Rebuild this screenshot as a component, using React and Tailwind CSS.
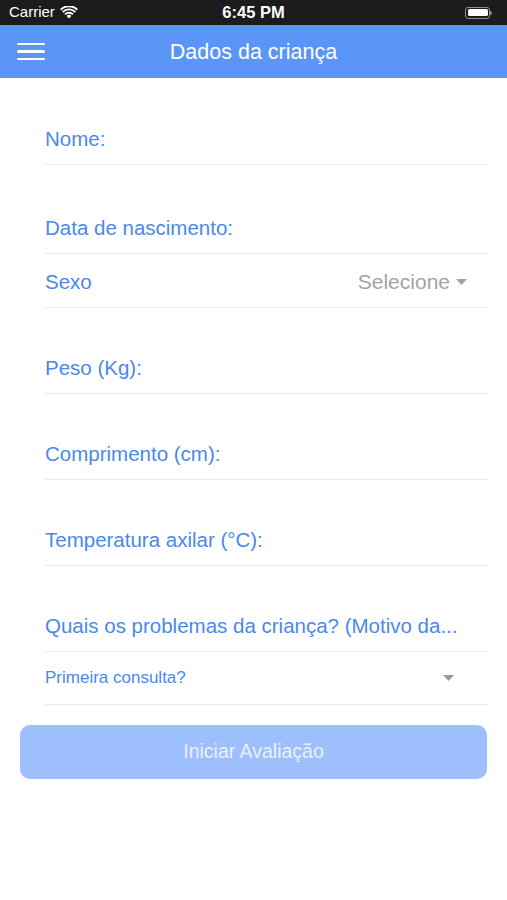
import React from 'react';

const font = { fontFamily: '"Liberation Sans", Arial, sans-serif' };

const Caret = ({ className }) => (
  <svg className={className} width="11" height="6" viewBox="0 0 11 6">
    <path d="M0 0 L11 0 L5.5 6 Z" fill="currentColor" />
  </svg>
);

const Field = ({ label, height = 'h-[86px]', children }) => (
  <div className={`${height} flex items-end border-b border-[#e9e9e9]`}>
    <div className="w-full flex items-center justify-between pb-[13px]">
      <span className="text-[20.5px] leading-[24px] text-[#4a88ee]">{label}</span>
      {children}
    </div>
  </div>
);

export default function App() {
  return (
    <div className="w-[507px] h-[900px] bg-white" style={font}>
      <div className="h-[25px] bg-[#1c1c1e] flex items-center justify-between px-[9px] text-white text-[15px] relative">
        <div className="flex items-center gap-[5px]">
          <span>Carrier</span>
          <svg width="18" height="13" viewBox="0 0 18 13">
            <path d="M9 12.5 L6.6 9.9 A3.4 3.4 0 0 1 11.4 9.9 Z" fill="white" />
            <path d="M4.4 7.6 A6.6 6.6 0 0 1 13.6 7.6 L12.3 9 A4.7 4.7 0 0 0 5.7 9 Z" fill="white" />
            <path d="M2.1 5.3 A9.8 9.8 0 0 1 15.9 5.3 L14.6 6.7 A7.9 7.9 0 0 0 3.4 6.7 Z" fill="white" />
            <path d="M0 3 A12.8 12.8 0 0 1 18 3 L16.7 4.4 A10.9 10.9 0 0 0 1.3 4.4 Z" fill="white" />
          </svg>
        </div>
        <span className="absolute left-1/2 -translate-x-1/2 font-bold text-[16.5px]">6:45 PM</span>
        <div className="flex items-center pr-[6px]">
          <div className="w-[25px] h-[12px] rounded-[3px] border border-[#8e8e93] p-[1.5px]">
            <div className="w-full h-full bg-white rounded-[1.5px]" />
          </div>
          <div className="w-[2px] h-[4px] bg-[#8e8e93] rounded-r-sm" />
        </div>
      </div>

      <div className="h-[53px] bg-[#5b95f8] flex items-center relative">
        <div className="pl-[17px] flex flex-col gap-[5px]">
          <div className="w-[28px] h-[2.5px] bg-white rounded" />
          <div className="w-[28px] h-[2.5px] bg-white rounded" />
          <div className="w-[28px] h-[2.5px] bg-white rounded" />
        </div>
        <span className="absolute left-1/2 -translate-x-1/2 top-[14px] text-white text-[21.5px] leading-[26px]">Dados da criança</span>
      </div>

      <div className="pl-[45px] pr-[19px] pt-[1px]">
        <Field label="Nome:" />
        <Field label="Data de nascimento:" height="h-[89px]" />
        <Field label="Sexo" height="h-[54px]">
          <div className="flex items-center gap-[6px] pr-[21px] text-[#a3a3a3]">
            <span className="text-[21px] leading-[24px]">Selecione</span>
            <Caret className="text-[#a3a3a3]" />
          </div>
        </Field>
        <Field label="Peso (Kg):" />
        <Field label="Comprimento (cm):" />
        <Field label="Temperatura axilar (°C):" />
        <Field label="Quais os problemas da criança? (Motivo da..." />
        <div className="h-[53px] flex items-center justify-between border-b border-[#e9e9e9]">
          <span className="text-[17px] text-[#4a88ee]">Primeira consulta?</span>
          <Caret className="text-[#9a9a9a] mr-[34px]" />
        </div>
      </div>

      <div className="px-[20px] pt-[20px]">
        <button className="w-full h-[54px] rounded-[10px] bg-[#9dbffb] text-[#eaf1fe] text-[19.5px]">
          Iniciar Avaliação
        </button>
      </div>
    </div>
  );
}
